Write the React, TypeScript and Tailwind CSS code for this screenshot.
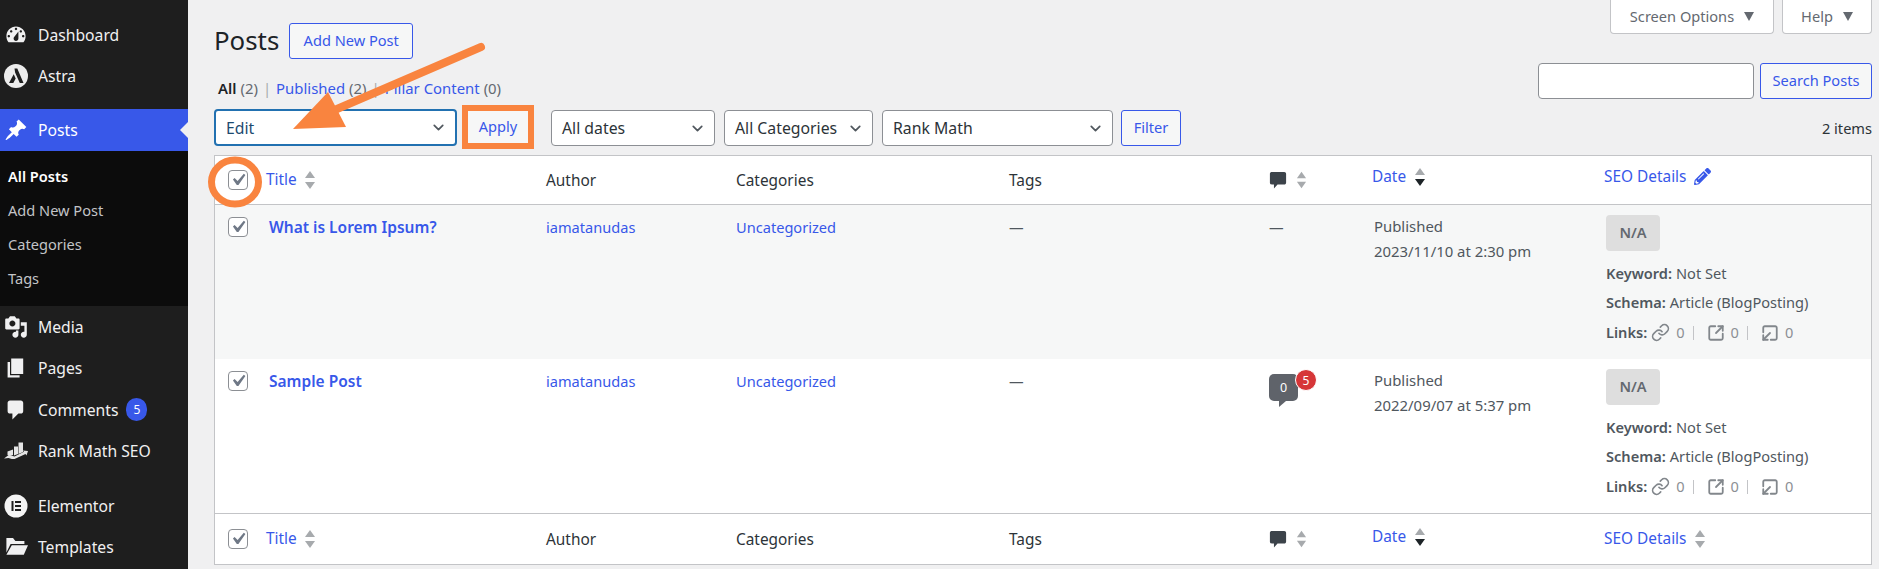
import { ReactNode } from "react";
import { ChevronDown, Link, SquareArrowOutDownLeft, SquareArrowOutUpRight } from "lucide-react";
import { FaPencilAlt } from "react-icons/fa";

function DashIcon({ d, className }: { d: string; className?: string }) {
  return (
    <svg viewBox="0 0 20 20" className={className ?? "h-6 w-6"} fill="currentColor">
      <path fillRule="evenodd" d={d} />
    </svg>
  );
}

const dashboardPath =
  "M3.76 16h12.48c1.1-1.37 1.76-3.11 1.76-5 0-4.42-3.58-8-8-8s-8 3.58-8 8c0 1.89.66 3.63 1.76 5zM10 4c.55 0 1 .45 1 1s-.45 1-1 1-1-.45-1-1 .45-1 1-1zM6 6c.55 0 1 .45 1 1s-.45 1-1 1-1-.45-1-1 .45-1 1-1zm8 0c.55 0 1 .45 1 1s-.45 1-1 1-1-.45-1-1 .45-1 1-1zm-5.37 5.55L12 7v6c0 1.1-.9 2-2 2s-2-.9-2-2c0-.57.24-1.08.63-1.45zM4 10c.55 0 1 .45 1 1s-.45 1-1 1-1-.45-1-1 .45-1 1-1zm12 0c.55 0 1 .45 1 1s-.45 1-1 1-1-.45-1-1 .45-1 1-1z";
const pinPath =
  "M10.44 3.02l1.82-1.82 6.36 6.35-1.83 1.82c-1.05-.68-2.48-.57-3.41.36l-.75.75c-.92.93-1.04 2.35-.35 3.41l-1.83 1.82-2.41-2.41-2.8 2.79c-.42.42-3.38 2.71-3.8 2.29s1.86-3.39 2.28-3.81l2.79-2.79L4.1 9.36l1.83-1.82c1.05.69 2.48.57 3.4-.36l.75-.75c.93-.92 1.05-2.35.36-3.41z";
const mediaPath =
  "M13 11V4c0-.55-.45-1-1-1h-1.67L9 1H5L3.67 3H2c-.55 0-1 .45-1 1v7c0 .55.45 1 1 1h10c.55 0 1-.45 1-1zM7 4.5c1.38 0 2.5 1.12 2.5 2.5S8.38 9.5 7 9.5 4.5 8.38 4.5 7 5.62 4.5 7 4.5zM14 6h5v10.5c0 1.38-1.12 2.5-2.5 2.5S14 17.88 14 16.5s1.12-2.5 2.5-2.5c.17 0 .34.02.5.05V9h-3V6zm-4 8.05V13h2v3.5c0 1.38-1.12 2.5-2.5 2.5S7 17.88 7 16.5 8.12 14 9.5 14c.17 0 .34.02.5.05z";
const pagesPath = "M6 15V2h10v13H6zm-1 1h8v2H3V5h2v11z";
const commentPath = "M5 2h9c1.1 0 2 .9 2 2v7c0 1.1-.9 2-2 2h-2l-5 5v-5H5c-1.1 0-2-.9-2-2V4c0-1.1.9-2 2-2z";
const folderPath = "M2 2.5h5.5l2 2.5H17v2.5H5.5L2 14.5zM6.5 8.5H20l-3.5 8H2z";

function AstraIcon() {
  return (
    <svg viewBox="0 0 24 24" className="h-6 w-6">
      <circle cx="12" cy="12" r="12" fill="#ececec" />
      <path d="M10.5 4.5h2.8L19.5 19h-3.7l-4.7-10.6zM9.7 10.2l2 4.3-2.4 4.5H5z" fill="#1e1e1e" />
    </svg>
  );
}

function ElementorIcon() {
  return (
    <svg viewBox="0 0 24 24" className="h-6 w-6">
      <circle cx="12" cy="12" r="11.5" fill="#f4f4f4" />
      <path d="M7.5 7h2v10h-2zM11 7h6v2h-6zM11 11h6v2h-6zM11 15h6v2h-6z" fill="#1e1e1e" />
    </svg>
  );
}

function RankMathIcon() {
  return (
    <svg viewBox="0 0 24 17" className="h-[17px] w-6" fill="#e4e4e4">
      <path d="M3.500 9.500 9 7.500v5.500l-3 .8-2.500-.8zM10 4.500h4V12l-4 1.500zM14.500.5H19v9.500l-4.500 2z" />
      <path d="M0 16.500 5 12.800l5.500 1.700 9.500-4.700-1.300-1.300 5.300.5-1.500 4.500-1-1.500-12 5.500-5-1.500z" />
    </svg>
  );
}

function SortArrows({ active, className }: { active?: boolean; className?: string }) {
  return (
    <svg viewBox="0 0 12 18" className={className ?? "h-[18px] w-3"}>
      <path d="M6 0l5 7H1z" fill="#a7aaad" />
      <path d="M6 18l5-7H1z" fill={active ? "#1d2327" : "#a7aaad"} />
    </svg>
  );
}

function Check() {
  return (
    <span className="flex h-5 w-5 items-center justify-center rounded-[4px] border-[1.5px] border-[#8c8f94] bg-white">
      <svg viewBox="0 0 20 20" className="h-[24px] w-[24px] shrink-0" fill="#6f7886">
        <path d="M14.83 4.89l1.34.94-5.81 8.38H9.02L5.78 9.67l1.34-1.25 2.57 2.4z" />
      </svg>
    </span>
  );
}

function FakeSelect({ label, className, focused }: { label: string; className: string; focused?: boolean }) {
  return (
    <div
      className={`flex h-[36px] items-center justify-between rounded-[4px] bg-white pl-[10px] pr-[8px] text-[15.8px] ${
        focused ? "border-2 border-[#2271b1] text-[#1d4a70]" : "border border-[#8c8f94] text-[#2c3338]"
      } ${className}`}
    >
      <span className="pt-[2px]">{label}</span>
      <ChevronDown size={17} strokeWidth={2.4} className="text-[#50575e]" />
    </div>
  );
}

function SecondaryButton({ children, className }: { children: ReactNode; className: string }) {
  return (
    <div
      className={`flex items-center justify-center rounded-[3px] border border-[#3858e9] bg-[#f6f7f7] text-[14.6px] text-[#3858e9] ${className}`}
    >
      {children}
    </div>
  );
}

function MenuItem({ icon, label, heightClass, badge }: { icon: ReactNode; label: string; heightClass: string; badge?: string }) {
  return (
    <div className={`flex items-center text-[15.7px] text-[#f0f0f1] ${heightClass}`}>
      <span className="flex w-[38px] shrink-0 justify-center pr-[6px]">{icon}</span>
      <span className="pt-[2px]">{label}</span>
      {badge && (
        <span className="ml-[8px] flex h-[23px] w-[21px] items-center justify-center rounded-full bg-[#3858e9] text-[12px] text-white">
          {badge}
        </span>
      )}
    </div>
  );
}

function Sidebar() {
  return (
    <aside className="flex h-full w-[188px] shrink-0 flex-col bg-[#1e1e1e] pt-[14px]">
      <MenuItem heightClass="h-[41px]" icon={<DashIcon d={dashboardPath} />} label="Dashboard" />
      <MenuItem heightClass="h-[41px]" icon={<AstraIcon />} label="Astra" />
      <div className="relative mt-[13px] flex h-[42px] items-center bg-[#3858e9] text-[15.7px] text-white">
        <span className="flex w-[38px] shrink-0 justify-center pr-[6px]">
          <DashIcon d={pinPath} />
        </span>
        <span className="pt-[2px]">Posts</span>
        <span className="absolute right-0 top-[13px] h-0 w-0 border-y-[8px] border-r-[8px] border-y-transparent border-r-[#f0f0f1]" />
      </div>
      <div className="flex h-[155px] flex-col bg-[#0c0c0c] pl-[8px] pt-[9px] text-[14.6px] text-[#c3c4c7]">
        <div className="flex h-[34px] items-center font-semibold text-white">All Posts</div>
        <div className="flex h-[34px] items-center">Add New Post</div>
        <div className="flex h-[34px] items-center">Categories</div>
        <div className="flex h-[34px] items-center">Tags</div>
      </div>
      <MenuItem heightClass="h-[41px]" icon={<DashIcon d={mediaPath} />} label="Media" />
      <MenuItem heightClass="h-[42px]" icon={<DashIcon d={pagesPath} />} label="Pages" />
      <MenuItem heightClass="h-[41px]" icon={<DashIcon d={commentPath} />} label="Comments" badge="5" />
      <MenuItem heightClass="h-[41px]" icon={<RankMathIcon />} label="Rank Math SEO" />
      <MenuItem heightClass="mt-[14px] h-[41px]" icon={<ElementorIcon />} label="Elementor" />
      <MenuItem heightClass="h-[41px]" icon={<DashIcon d={folderPath} />} label="Templates" />
    </aside>
  );
}

const columns = "grid grid-cols-[51px_280px_190px_273px_260px_103px_232px_1fr]";

function CommentHeadIcon() {
  return (
    <span className="flex items-center gap-[9px]">
      <DashIcon
        d="M3 1h14c1.100 0 2 .9 2 2v10c0 1.100-.9 2-2 2H9.500L5.500 19.500V15H3c-1.100 0-2-.9-2-2V3c0-1.100.9-2 2-2z"
        className="h-[20px] w-[18px] text-[#3c434a]"
      />
      <SortArrows className="h-[18px] w-[11px]" />
    </span>
  );
}

function HeaderRow({ footer }: { footer?: boolean }) {
  const dateOffset = footer ? "pb-[4px]" : "pb-[6px]";
  return (
    <div className={`${columns} items-center text-[15.4px] text-[#2c3338] ${footer ? "h-[50px]" : "h-[49px] border-b border-[#c3c4c7]"}`}>
      <div className="flex justify-center pr-[5px]">
        <Check />
      </div>
      <div className="flex items-center gap-[7px] text-[#3858e9]">
        Title <SortArrows />
      </div>
      <div className="pt-[1px]">Author</div>
      <div className="pt-[1px]">Categories</div>
      <div className="pt-[1px]">Tags</div>
      <CommentHeadIcon />
      <div className={`flex items-center gap-[8px] text-[#3858e9] ${dateOffset}`}>
        Date <SortArrows active />
      </div>
      <div className={`flex items-center gap-[8px] text-[#3858e9] ${footer ? "" : "pb-[6px]"}`}>
        SEO Details
        {footer ? <SortArrows /> : <FaPencilAlt className="text-[17px] text-[#3858e9]" />}
      </div>
    </div>
  );
}

function LinkCount({ icon, sep }: { icon: ReactNode; sep?: boolean }) {
  return (
    <span className="flex items-center text-[#8c8f94]">
      {icon}
      <span className="ml-[6px]">0</span>
      {sep && <span className="ml-[8px] mr-[13px] h-[14px] w-px bg-[#c3c4c7]" />}
    </span>
  );
}

function PostRow({ title, date, stripe, comments }: { title: string; date: string; stripe?: boolean; comments?: boolean }) {
  return (
    <div className={`${columns} h-[154px] text-[14.6px] text-[#50575e] ${stripe ? "bg-[#f6f7f7]" : "bg-white"}`}>
      <div className="flex justify-center pr-[5px] pt-[12px]">
        <Check />
      </div>
      <div className="pl-[3px] pt-[10px] text-[15.5px] font-semibold leading-6 text-[#3858e9]">{title}</div>
      <div className="pt-[10px] leading-6 text-[#3858e9]">iamatanudas</div>
      <div className="pt-[10px] leading-6 text-[#3858e9]">Uncategorized</div>
      <div className="pt-[10px] leading-6">—</div>
      <div className="pt-[10px] leading-6">
        {comments ? (
          <div className="relative mt-[5px] h-[27px] w-[29px] rounded-[5px] bg-[#5f636a] text-center text-[12.5px] leading-[27px] text-white">
            0
            <span className="absolute left-[10px] top-[27px] h-0 w-0 border-r-[7px] border-t-[6px] border-r-transparent border-t-[#5f636a]" />
            <span className="absolute left-[26px] top-[-5px] flex h-[22px] w-[22px] items-center justify-center rounded-full border border-white bg-[#d63638] text-[12px]">
              5
            </span>
          </div>
        ) : (
          "—"
        )}
      </div>
      <div className="pl-[2px] pt-[9px] text-[14.9px] leading-[25px]">
        <div>Published</div>
        <div>{date}</div>
      </div>
      <div className="pl-[2px] pt-[10px]">
        <div className="flex h-[36px] w-[54px] items-center justify-center rounded-[4px] bg-[#dedede] font-semibold text-[#646970]">N/A</div>
        <div className="mt-[8px] flex h-[29.500px] items-center gap-[4px] text-[14.6px]">
          <b className="font-semibold">Keyword:</b> Not Set
        </div>
        <div className="flex h-[29.500px] items-center gap-[4px] text-[14.6px]">
          <b className="font-semibold">Schema:</b> Article (BlogPosting)
        </div>
        <div className="flex h-[29.500px] items-center text-[14.6px]">
          <b className="mr-[4px] font-semibold">Links:</b>
          <LinkCount sep icon={<Link size={19} strokeWidth={2.1} className="text-[#82878c]" />} />
          <LinkCount sep icon={<SquareArrowOutUpRight size={18} strokeWidth={2.4} className="text-[#82878c]" />} />
          <LinkCount icon={<SquareArrowOutDownLeft size={18} strokeWidth={2.4} className="text-[#82878c]" />} />
        </div>
      </div>
    </div>
  );
}

function PostsTable() {
  return (
    <div className="border border-[#c3c4c7] bg-white">
      <HeaderRow />
      <PostRow stripe title="What is Lorem Ipsum?" date="2023/11/10 at 2:30 pm" />
      <div className="border-b border-[#c3c4c7]">
        <PostRow comments title="Sample Post" date="2022/09/07 at 5:37 pm" />
      </div>
      <HeaderRow footer />
    </div>
  );
}

function Caret() {
  return <span className="h-0 w-0 border-x-[5px] border-t-[9px] border-x-transparent border-t-[#646970]" />;
}

function Main() {
  return (
    <main className="flex min-w-0 flex-1 flex-col pl-[26px] pr-[7px]">
      <div className="flex h-[63px] items-start justify-between">
        <div className="mt-[23px] flex items-center gap-[10px]">
          <h1 className="pb-[2px] text-[25.800px] leading-8 text-[#1d2327]">Posts</h1>
          <SecondaryButton className="h-[36px] w-[124px]">Add New Post</SecondaryButton>
        </div>
        <div className="flex gap-[8px] text-[14.6px] text-[#646970]">
          <div className="flex h-[34px] w-[164px] items-center justify-center gap-[10px] rounded-b-[4px] border border-t-0 border-[#c3c4c7] bg-white">
            Screen Options <Caret />
          </div>
          <div className="flex h-[34px] w-[90px] items-center justify-center gap-[10px] rounded-b-[4px] border border-t-0 border-[#c3c4c7] bg-white">
            Help <Caret />
          </div>
        </div>
      </div>
      <div className="flex h-[42px] items-start justify-between">
        <div className="mt-[13px] flex gap-[4px] pl-[4px] text-[14.9px] leading-6 text-[#646970]">
          <span className="font-semibold text-[#1d2327]">All</span> (2)
          <span className="mx-[1px] text-[#a7aaad]">|</span>
          <span className="text-[#3858e9]">Published</span> (2)
          <span className="mx-[1px] text-[#a7aaad]">|</span>
          <span className="text-[#3858e9]">Pillar Content</span> (0)
        </div>
        <div className="flex gap-[6px]">
          <div className="h-[36px] w-[216px] rounded-[4px] border border-[#8c8f94] bg-white" />
          <SecondaryButton className="h-[36px] w-[112px]">Search Posts</SecondaryButton>
        </div>
      </div>
      <div className="flex h-[50px] items-start">
        <FakeSelect focused label="Edit" className="mt-[4px] h-[37px] w-[243px]" />
        <div className="ml-[5px] flex h-[44px] w-[72px] items-center justify-center border-[6px] border-[#f9843f]">
          <div className="flex h-full w-full items-center justify-center bg-[#f6f7f7] text-[14.6px] text-[#3858e9]">Apply</div>
        </div>
        <FakeSelect label="All dates" className="ml-[17px] mt-[5px] w-[164px]" />
        <FakeSelect label="All Categories" className="ml-[9px] mt-[5px] w-[149px]" />
        <FakeSelect label="Rank Math" className="ml-[9px] mt-[5px] w-[231px]" />
        <SecondaryButton className="ml-[8px] mt-[5px] h-[36px] w-[60px]">Filter</SecondaryButton>
        <div className="ml-auto mt-[11px] text-[14.6px] leading-6 text-[#2c3338]">2 items</div>
      </div>
      <PostsTable />
    </main>
  );
}

function Annotations() {
  return (
    <svg className="pointer-events-none absolute left-0 top-0 h-[569px] w-[1879px]" viewBox="0 0 1879 569">
      <path d="M481 47 330 112" stroke="#f9843f" strokeWidth="8" strokeLinecap="round" fill="none" />
      <path d="M293 129 328 92 346 127z" fill="#f9843f" />
      <ellipse cx="235" cy="182" rx="23.500" ry="22" fill="none" stroke="#f9843f" strokeWidth="7" />
    </svg>
  );
}

export default function App() {
  return (
    <div className="relative flex h-[569px] w-full overflow-hidden bg-[#f0f0f1] font-['Noto_Sans','Liberation_Sans',sans-serif]">
      <Sidebar />
      <Main />
      <Annotations />
    </div>
  );
}
